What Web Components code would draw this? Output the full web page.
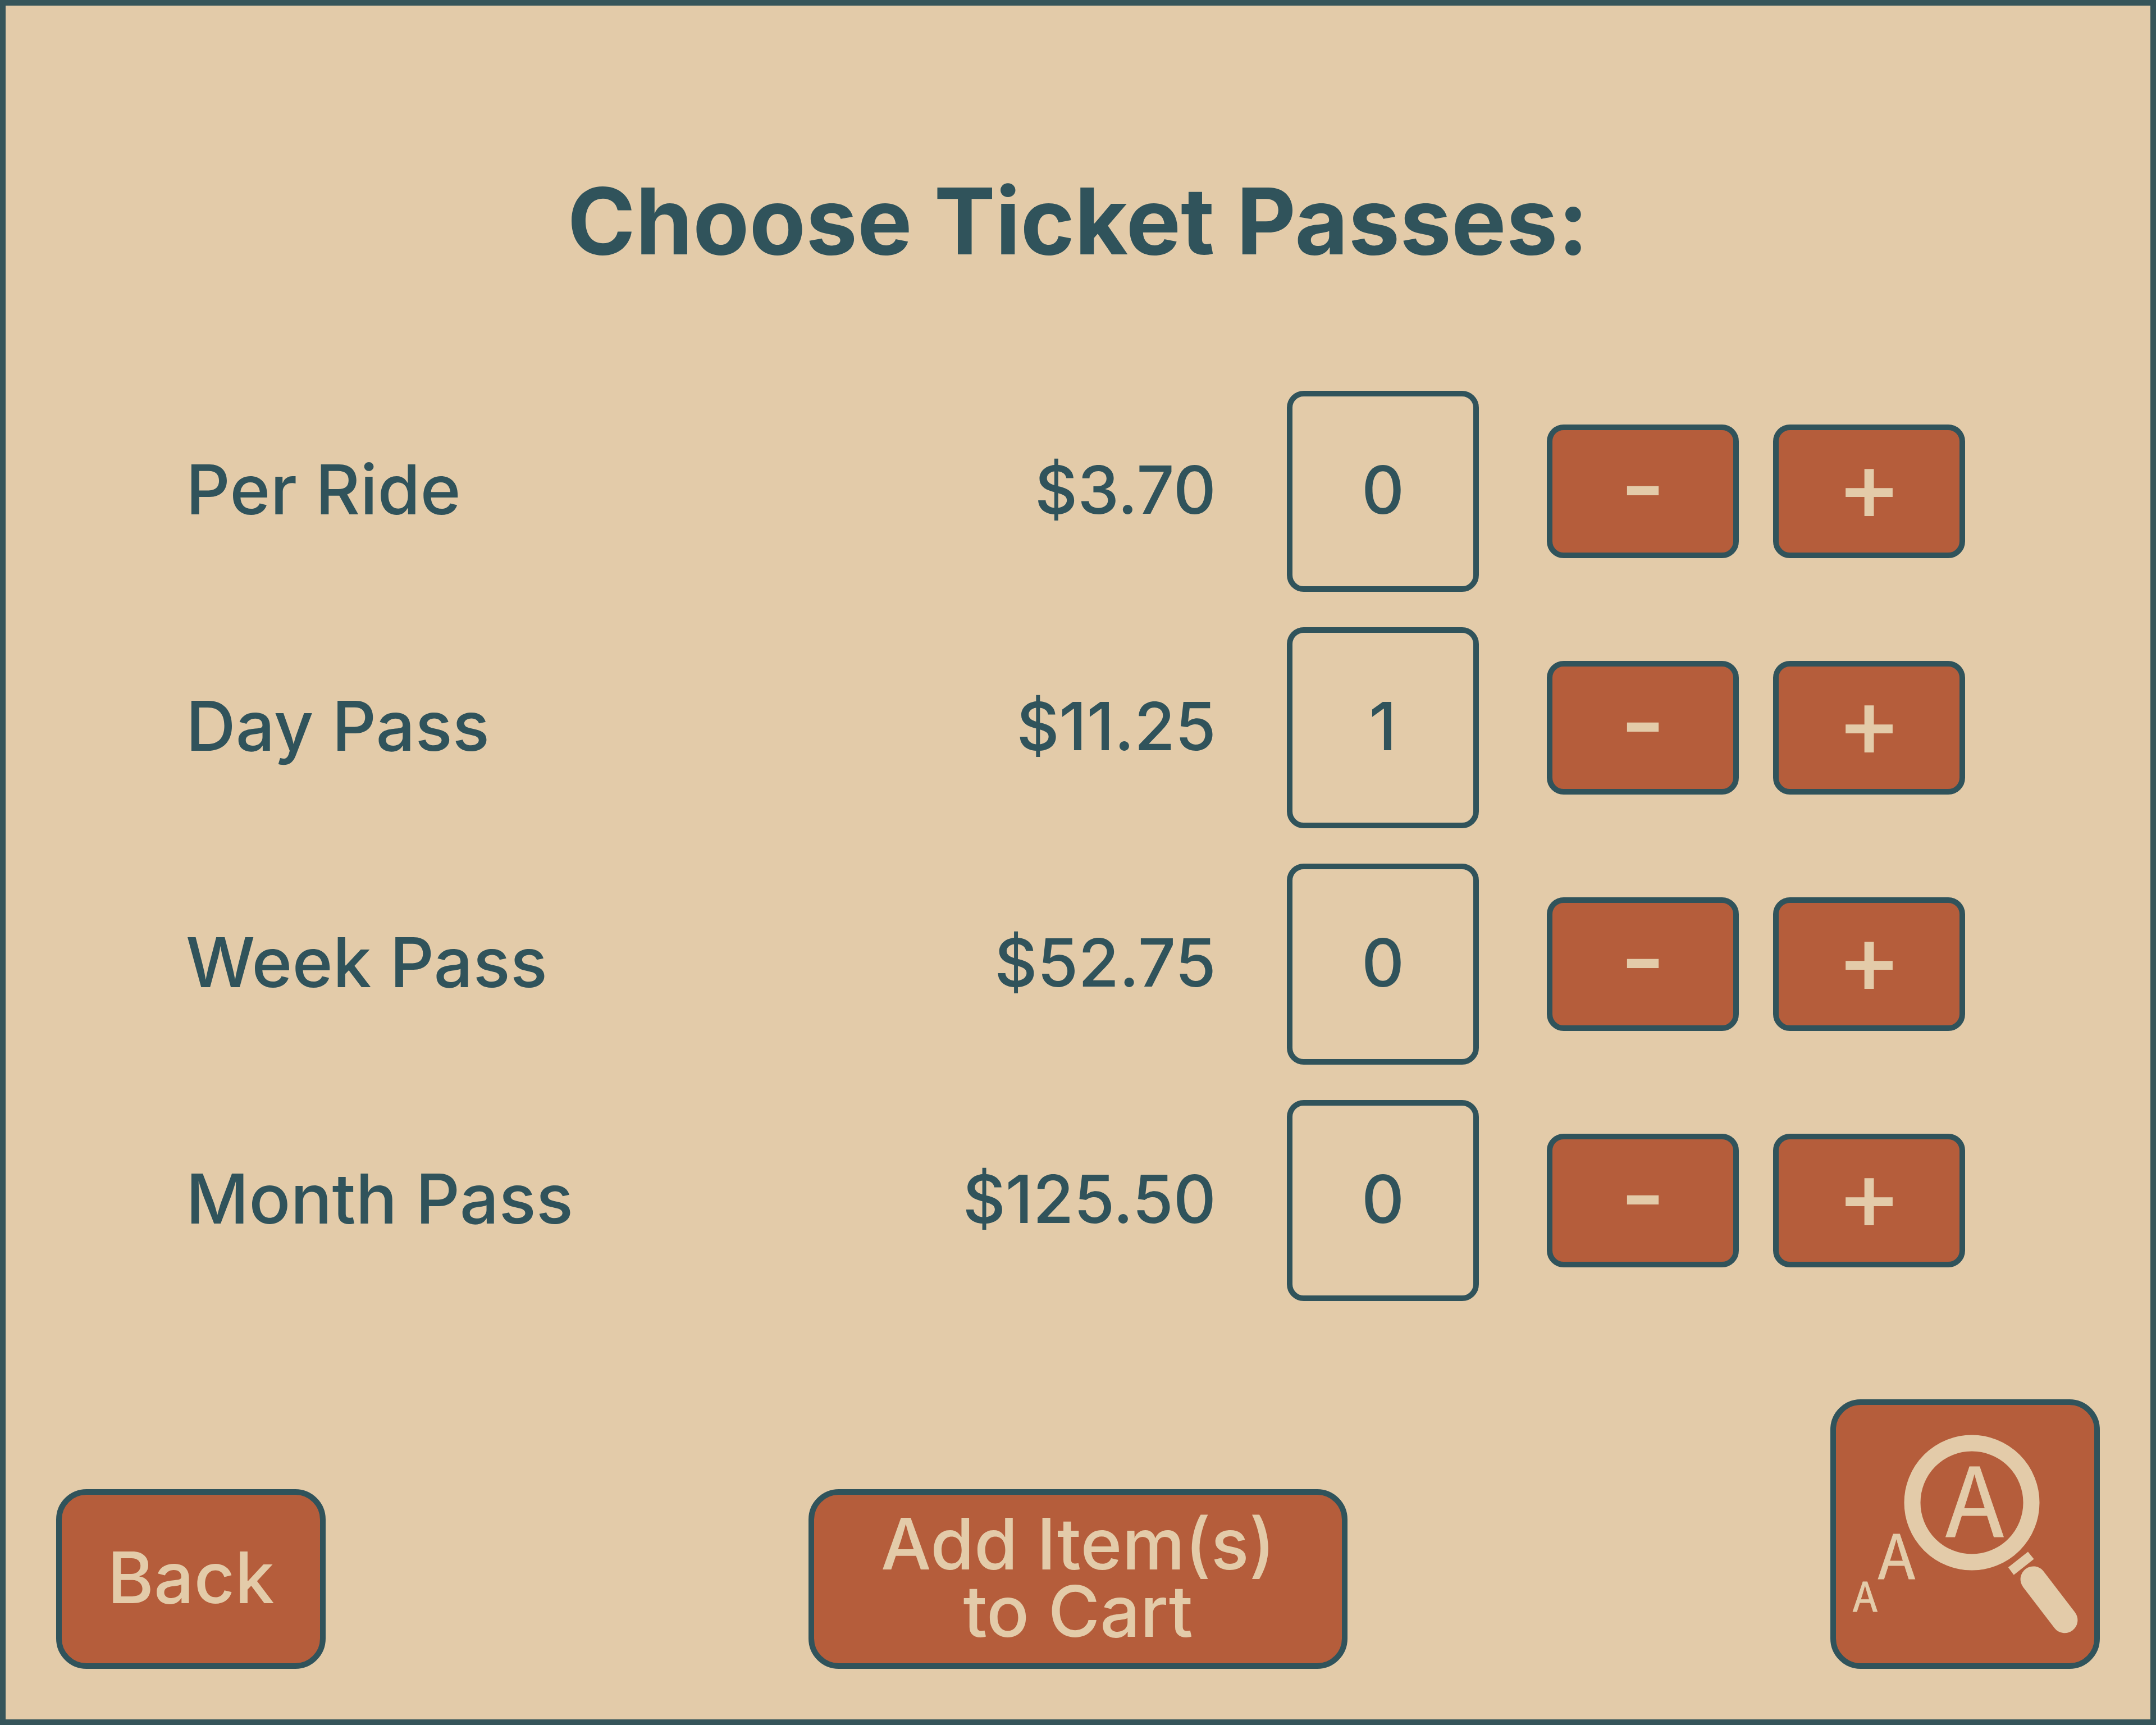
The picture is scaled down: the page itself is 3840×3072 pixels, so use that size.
<!DOCTYPE html>
<html lang="en">
<head>
<meta charset="utf-8">
<title>Choose Ticket Passes</title>
<style>
  :root {
    --sand: #e3cba9;
    --teal: #30535b;
    --frame: #36555a;
    --rust: #b55d3b;
    --line: 10px;
  }
  body {
    margin: 0;
    background: var(--sand);
    color: var(--teal);
    font-family: Inter, "Liberation Sans", sans-serif;
  }
</style>
</head>
<body>
<ticket-screen>
  <span slot="title">Choose Ticket Passes:</span>
  <pass-row name="Per Ride" price="$3.70" count="0"></pass-row>
  <pass-row name="Day Pass" price="$11.25" count="1"></pass-row>
  <pass-row name="Week Pass" price="$52.75" count="0"></pass-row>
  <pass-row name="Month Pass" price="$125.50" count="0"></pass-row>
  <kiosk-button slot="actions">Back</kiosk-button>
  <kiosk-button slot="actions" wide>Add Item(s) to Cart</kiosk-button>
  <kiosk-button slot="actions" label="Change text size" tall><zoom-icon></zoom-icon></kiosk-button>
</ticket-screen>

<template id="ticket-screen">
  <style>
    :host {
      display: flex;
      flex-direction: column;
      box-sizing: border-box;
      min-height: 100vh;
      padding: 284px 90px 90px;
      border: var(--line) solid var(--frame);
    }
    h1 {
      margin: 0 0 202px;
      font-size: 164px;
      line-height: 200px;
      font-weight: 700;
      text-align: center;
    }
    main {
      display: flex;
      flex-direction: column;
      gap: 63px;
      padding: 0 240px 0 231px;
    }
    footer {
      display: grid;
      grid-template-columns: 1fr auto 1fr;
      align-items: end;
      margin-top: auto;
    }
    ::slotted(kiosk-button) { justify-self: center; }
    ::slotted(kiosk-button:first-of-type) { justify-self: start; }
    ::slotted(kiosk-button:last-of-type) { justify-self: end; }
  </style>
  <h1><slot name="title"></slot></h1>
  <main><slot></slot></main>
  <footer><slot name="actions"></slot></footer>
</template>

<template id="pass-row">
  <style>
    :host {
      display: flex;
      align-items: center;
      font-size: 118px;
      line-height: 120px;
      font-weight: 500;
    }
    label {
      flex: 1;
      padding-bottom: 6px;
      font-size: 123px;
    }
    .price {
      margin-right: 126px;
      padding-bottom: 6px;
    }
    input, button {
      box-sizing: border-box;
      width: 342px;
      margin: 0;
      border: var(--line) solid var(--teal);
      border-radius: 30px;
      font: inherit;
      text-align: center;
    }
    input {
      height: 358px;
      margin-right: 121px;
      padding: 0 0 6px;
      background: none;
      color: inherit;
    }
    .steps { display: flex; gap: 61px; }
    button {
      height: 238px;
      padding: 0 0 22px;
      background: var(--rust);
      color: var(--sand);
      font-size: 174px;
    }
  </style>
  <label for="count"></label>
  <span class="price"></span>
  <input id="count" type="text" inputmode="numeric">
  <div class="steps">
    <button type="button" class="less">-</button>
    <button type="button" class="more">+</button>
  </div>
</template>

<template id="kiosk-button">
  <style>
    :host { display: block; }
    button {
      display: flex;
      align-items: center;
      justify-content: center;
      box-sizing: border-box;
      width: 480px;
      height: 320px;
      margin: 0;
      padding: 0 0 6px;
      border: var(--line) solid var(--teal);
      border-radius: 54px;
      background: var(--rust);
      color: var(--sand);
      font: inherit;
      font-size: 126px;
      line-height: 120px;
      font-weight: 500;
    }
    :host([wide]) button { width: 960px; padding: 0 90px 6px; }
    :host([tall]) button { height: 480px; padding: 0; }
  </style>
  <button type="button"><span><slot></slot></span></button>
</template>

<template id="zoom-icon">
  <style>
    :host { display: block; }
    svg {
      display: block;
      width: 460px;
      height: 460px;
      font-family: "Noto Sans CJK JP", sans-serif;
      font-weight: 400;
    }
  </style>
  <svg viewBox="10 10 460 460" fill="#e3cba9" aria-hidden="true">
    <circle cx="252" cy="184" r="106" fill="none" stroke="#e3cba9" stroke-width="29"/>
    <path d="M352 271.5 362.5 284.5 326.7 312.7 316.8 299.3Z"/>
    <path d="M361.6 320.4 417.4 393.3" stroke="#e3cba9" stroke-width="46" stroke-linecap="round"/>
    <g text-anchor="middle" stroke="#e3cba9" stroke-width="1">
      <text x="257" y="245" font-size="171">A</text>
      <text x="118" y="320" font-size="109">A</text>
      <text x="62" y="378" font-size="72">A</text>
    </g>
  </svg>
</template>

<script>
  class TemplateElement extends HTMLElement {
    constructor() {
      super();
      const template = document.getElementById(this.localName);
      this.attachShadow({ mode: "open" }).append(template.content.cloneNode(true));
    }
  }

  class TicketScreen extends TemplateElement {}
  class ZoomIcon extends TemplateElement {}

  class KioskButton extends TemplateElement {
    connectedCallback() {
      const label = this.getAttribute("label");
      if (label) this.shadowRoot.querySelector("button").setAttribute("aria-label", label);
    }
  }

  class PassRow extends TemplateElement {
    connectedCallback() {
      const find = (selector) => this.shadowRoot.querySelector(selector);
      const name = this.getAttribute("name");
      const field = find("input");
      find("label").textContent = name;
      find(".price").textContent = this.getAttribute("price");
      field.value = this.getAttribute("count");
      const less = find(".less");
      const more = find(".more");
      less.setAttribute("aria-label", "Remove one " + name);
      more.setAttribute("aria-label", "Add one " + name);
      const step = (by) => { field.value = Math.max(0, (parseInt(field.value, 10) || 0) + by); };
      less.onclick = () => step(-1);
      more.onclick = () => step(1);
    }
  }

  customElements.define("ticket-screen", TicketScreen);
  customElements.define("pass-row", PassRow);
  customElements.define("kiosk-button", KioskButton);
  customElements.define("zoom-icon", ZoomIcon);
</script>
</body>
</html>
